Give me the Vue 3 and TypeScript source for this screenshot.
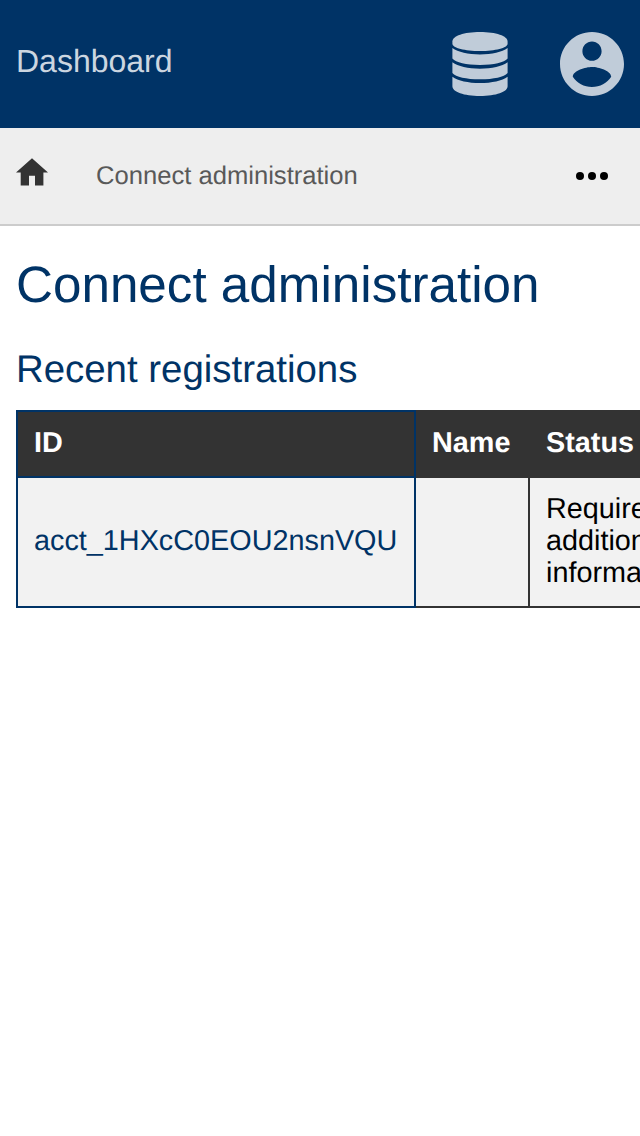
<script setup lang="ts">
interface Registration {
  id: string
  name: string
  status: string
}

const title = 'Connect administration'
const registrations: Registration[] = [
  { id: 'acct_1HXcC0EOU2nsnVQU', name: '', status: 'Requires additional information' },
]
</script>

<template>
  <div class="page">
    <header class="topbar">
      <a class="brand">Dashboard</a>
      <nav class="menus">
        <svg class="icon" viewBox="0 0 64 64" aria-label="Administration">
          <path d="M4.400 9.500C4.400 4 16 0 32 0s27.600 4 27.600 9.500v2.300C59.600 16 47 19.100 32 19.100S4.400 16 4.400 11.800z" />
          <path d="M4.400 16C10 20 20 22.400 32 22.400S54 20 59.600 16v10.600C56 30.600 46 33 32 33S8 30.600 4.400 26.600z" />
          <path d="M4.400 30.300C10 34.300 20 36.700 32 36.700S54 34.300 59.600 30.300v10.700C56 45 46 47.300 32 47.300S8 45 4.400 41z" />
          <path d="M4.400 44.700C10 48.700 20 51 32 51S54 48.700 59.600 44.700V54.300C59.600 60 48 64 32 64S4.400 60 4.400 54.300z" />
        </svg>
        <svg class="icon" viewBox="0 0 20 20" aria-label="Account">
          <path d="M10 0C4.480 0 0 4.480 0 10s4.480 10 10 10 10-4.480 10-10S15.520 0 10 0zm0 3c1.660 0 3 1.340 3 3s-1.340 3-3 3-3-1.340-3-3 1.340-3 3-3zm0 14.200c-2.500 0-4.710-1.280-6-3.220.03-1.990 4-3.080 6-3.080 1.990 0 5.970 1.090 6 3.080-1.290 1.940-3.500 3.220-6 3.220z" />
        </svg>
      </nav>
    </header>

    <nav class="crumbs">
      <svg class="home" viewBox="0 0 32 28" aria-label="Home">
        <path d="M16 .2 32 14.400H27.400V27.500H19V17.800H13V27.500H4.700V14.400H0z" />
      </svg>
      <span class="crumb">{{ title }}</span>
      <svg class="more" viewBox="0 0 32 8" aria-label="More">
        <circle cx="4" cy="4" r="4" />
        <circle cx="16" cy="4" r="4" />
        <circle cx="28" cy="4" r="4" />
      </svg>
    </nav>

    <main class="content">
      <h1>{{ title }}</h1>
      <h2>Recent registrations</h2>
      <table>
        <thead>
          <tr>
            <th class="id">ID</th>
            <th class="name">Name</th>
            <th class="status">Status</th>
          </tr>
        </thead>
        <tbody>
          <tr v-for="item in registrations" :key="item.id">
            <td class="id"><a>{{ item.id }}</a></td>
            <td class="name">{{ item.name }}</td>
            <td class="status">{{ item.status }}</td>
          </tr>
        </tbody>
      </table>
    </main>
  </div>
</template>

<style>
body {
  margin: 0;
  background: #fff;
}
</style>

<style scoped>
.page {
  width: 100%;
  min-height: 1136px;
  overflow: hidden;
  font-family: "Liberation Sans", Arial, sans-serif;
  text-rendering: geometricPrecision;
  color: #000;
}

.topbar {
  display: flex;
  align-items: center;
  justify-content: space-between;
  box-sizing: border-box;
  height: 128px;
  padding: 0 16px;
  background: #036;
}

.brand {
  padding-bottom: 6px;
  font-size: 32px;
  line-height: 36px;
  color: #ccd6e0;
}

.menus {
  display: flex;
  gap: 48px;
}

.icon {
  width: 64px;
  height: 64px;
  fill: #c0ccd9;
}

.crumbs {
  display: flex;
  align-items: center;
  box-sizing: border-box;
  height: 98px;
  padding: 0 32px 0 16px;
  border-bottom: 2px solid #ccc;
  background: #eee;
}

.home {
  width: 32px;
  height: 28px;
  margin-bottom: 8px;
  fill: #333;
}

.crumb {
  flex: 1;
  margin-left: 48px;
  font-size: 25.6px;
  line-height: 30px;
  color: #595959;
}

.more {
  width: 32px;
  height: 8px;
}

.content {
  padding: 30px 16px 0;
}

h1,
h2 {
  margin: 0;
  font-weight: 400;
  color: #036;
}

h1 {
  font-size: 51.2px;
  line-height: 58px;
}

h2 {
  margin: 34px 0 18px;
  font-size: 38.4px;
  line-height: 44px;
}

table {
  width: 732px;
  border-spacing: 0;
  table-layout: fixed;
  font-size: 28.8px;
  line-height: 32px;
}

th,
td {
  box-sizing: border-box;
  padding: 15px 16px 17px;
  border: 0 solid #333;
  text-align: left;
}

th {
  height: 68px;
  background: #333;
  color: #fff;
}

td {
  height: 130px;
  border-width: 0 2px 2px 0;
  background: #f2f2f2;
}

.id {
  width: 400px;
  border-color: #036;
}

th.id {
  border-width: 2px;
}

td.id {
  border-width: 0 2px 2px;
  color: #036;
}

.name {
  width: 114px;
}
</style>
